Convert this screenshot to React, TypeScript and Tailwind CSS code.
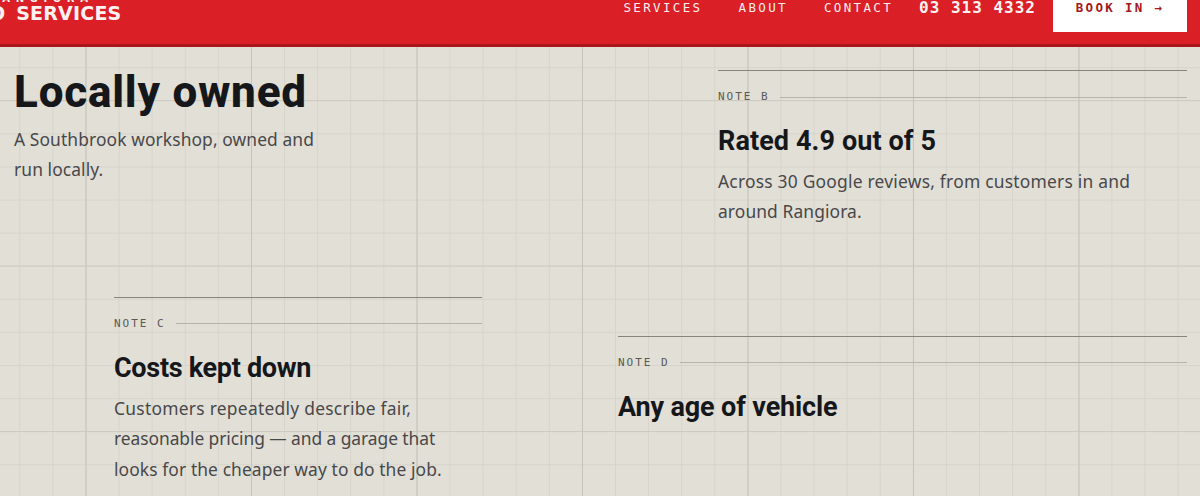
import React from 'react';

const MONO = "font-['DejaVu_Sans_Mono',monospace]";
const HEAD = "font-['Roboto',sans-serif]";
const BODY = "font-['Noto_Sans',sans-serif]";

interface NoteProps {
    label: string;
    title: string;
    titleClass: string;
    lines?: [string, string][];
    className: string;
}

// Ruled note card: top rule, mono label with trailing rule, title, body
const Note = ({ label, title, titleClass, lines = [], className }: NoteProps) => (
    <div className={`border-t border-[#85857c] ${className}`}>
        <div className="flex items-center gap-[10px] h-[14px] mt-[19px]">
            <span className={`${MONO} text-[11px] tracking-[2px] text-[#5a5a55] whitespace-pre`}>{label}</span>
            <div className="flex-1 h-px bg-[#b5b4ab]" />
        </div>
        <h3 className={`${HEAD} font-bold text-[27px] leading-[32px] mt-[21px] text-[#15171a] ${titleClass}`}>{title}</h3>
        <div className={`${BODY} text-[17.4px] leading-[30.4px] mt-[9px] text-[#48484a]`}>
            {lines.map(([text, tracking]) => <p key={text} className={tracking}>{text}</p>)}
        </div>
    </div>
);

export default function App() {
    return (
        <div className="h-[496px] w-[1200px] overflow-hidden bg-[#e2dfd7] bg-[linear-gradient(to_right,#c5c3ba_1px,transparent_1px),linear-gradient(to_bottom,#cdcbc2_1px,transparent_1px),linear-gradient(to_right,#d7d4cc_1px,transparent_1px),linear-gradient(to_bottom,#d7d4cc_1px,transparent_1px)] bg-size-[165.5px_165.5px,165.5px_165.5px,33.1px_33.1px,33.1px_33.1px] bg-position-[85.5px_0,0_100px,19.3px_0,0_1px]">
            {/* Header, page is scrolled so it sits cut off at the top */}
            <header className="h-[47px] bg-[#da1f26] border-b-[3px] border-[#a9161c] flex items-start justify-between pr-[13px]">
                <div className="-ml-[11px] -mt-[7px] font-['DejaVu_Sans',sans-serif] font-bold text-[#fdf1f1]">
                    <div className="text-[10px] leading-[12px] tracking-[5.6px] whitespace-pre">RANGIORA</div>
                    <div className="text-[19px] leading-[22px] -mt-[3px] tracking-[0.2px] [word-spacing:4px] whitespace-pre">O SERVICES</div>
                </div>
                <div className="flex items-start -mt-[18px]">
                    <nav className={`${MONO} flex gap-[36px] text-[12.5px] leading-[18px] tracking-[2.35px] text-[#fbeeee] mt-[17px]`}>
                        <a>SERVICES</a>
                        <a>ABOUT</a>
                        <a>CONTACT</a>
                    </nav>
                    <a className={`${MONO} ml-[26px] mt-[16px] text-[16px] leading-[20px] font-bold tracking-[1px] text-[#fdf3f3]`}>03 313 4332</a>
                    <a className={`${MONO} ml-[17px] w-[134px] h-[50px] pt-[17px] bg-white flex items-start justify-center text-[12.5px] leading-[18px] tracking-[2.3px] font-bold text-[#a5161d]`}>BOOK IN →</a>
                </div>
            </header>

            <main>
                <div className="flex items-start pl-[14px] pr-[13px]">
                    <div className="w-[340px] mt-[19px]">
                        <h2 className={`${HEAD} font-extrabold text-[44px] leading-[52px] tracking-[0.8px] text-[#15171a]`}>Locally owned</h2>
                        <div className={`${BODY} text-[17.4px] leading-[30px] tracking-[0.1px] mt-[6px] text-[#48484a]`}>
                            <p>A Southbrook workshop, owned and</p>
                            <p>run locally.</p>
                        </div>
                    </div>
                    <Note
                        className="ml-[364px] flex-1 mt-[23px]"
                        label="NOTE B"
                        title="Rated 4.9 out of 5"
                        titleClass="tracking-[0.1px]"
                        lines={[
                            ['Across 30 Google reviews, from customers in and', 'tracking-[0.23px]'],
                            ['around Rangiora.', 'tracking-[0.1px]'],
                        ]}
                    />
                </div>
                <div className="flex items-start pl-[114px] pr-[13px]">
                    <Note
                        className="w-[368px] mt-[70px]"
                        label="NOTE C"
                        title="Costs kept down"
                        titleClass="-tracking-[0.3px]"
                        lines={[
                            ['Customers repeatedly describe fair,', 'tracking-[0.27px]'],
                            ['reasonable pricing — and a garage that', '-tracking-[0.06px]'],
                            ['looks for the cheaper way to do the job.', 'tracking-[0.1px]'],
                        ]}
                    />
                    <Note className="ml-[136px] flex-1 mt-[109px]" label="NOTE D" title="Any age of vehicle" titleClass="-tracking-[0.15px]" />
                </div>
            </main>
        </div>
    );
}
